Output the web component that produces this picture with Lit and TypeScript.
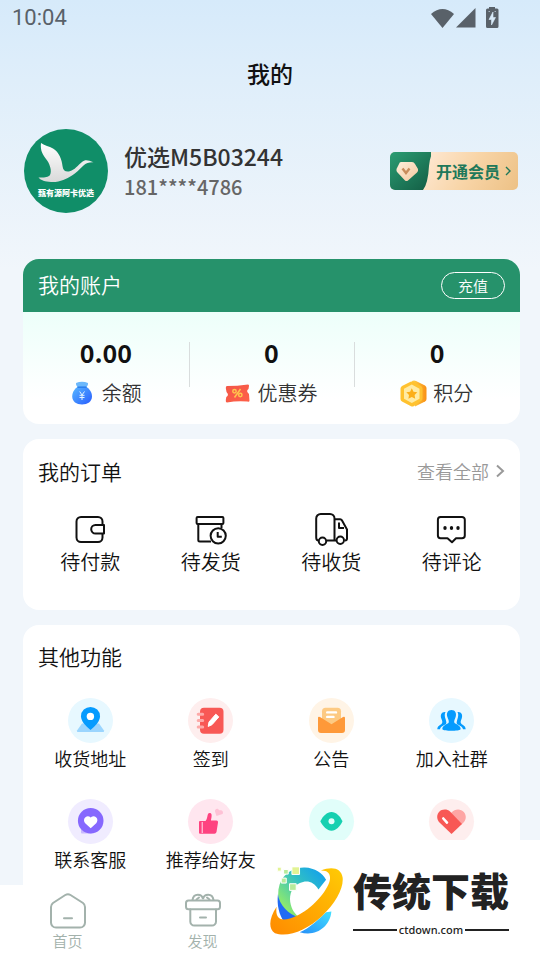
import { LitElement, html, css, svg, TemplateResult } from "lit";
import { customElement } from "lit/decorators.js";

type Entry = { label: string; icon: TemplateResult; tone?: string; hidden?: boolean };

const orders: Entry[] = [
  {
    label: "待付款",
    icon: svg`<rect x="4.500" y="6" width="26" height="25" rx="4.500"/><path d="M32 14H23.500a4.300 4.300 0 0 0 0 8.600H32Z" fill="#fff"/>`,
  },
  {
    label: "待发货",
    icon: svg`<rect x="3.600" y="6" width="26.800" height="7" rx="1"/><path d="M5.300 13V29a1.500 1.500 0 0 0 1.500 1.500H18M28.500 13V17"/><circle cx="25.200" cy="24.800" r="7.600" fill="#fff"/><path d="M24.700 21V25.700H28.800"/>`,
  },
  {
    label: "待收货",
    icon: svg`<path d="M5.500 29.500C3.600 29.500 3.200 28 3.200 26.500V7.500A4.500 4.500 0 0 1 7.700 3H17a4.500 4.500 0 0 1 4.500 4.500V29.500M14 29.500H23.500M21.500 8.300H27.200a2 2 0 0 1 1.700 1L34 18.500V27.500a2 2 0 0 1-2 2M26 11.500V17H31"/><circle cx="9.500" cy="30.300" r="3.700" fill="#fff"/><circle cx="27.300" cy="29.200" r="3.700" fill="#fff"/>`,
  },
  {
    label: "待评论",
    icon: svg`<path d="M6.500 6H28a2.800 2.800 0 0 1 2.800 2.800V24.500A2.800 2.800 0 0 1 28 27.300H22L18 31.200 13.500 27.300H6.500A2.800 2.800 0 0 1 3.900 24.500V8.800A2.800 2.800 0 0 1 6.500 6Z"/><g fill="#111" stroke="none"><ellipse cx="11" cy="17" rx="1.700" ry="2"/><ellipse cx="17.500" cy="17" rx="1.700" ry="2"/><ellipse cx="24" cy="17" rx="1.700" ry="2"/></g>`,
  },
];

const features: Entry[] = [
  {
    label: "收货地址",
    tone: "sky",
    icon: svg`<path d="M14 25.500H31L36 32.500Q36.500 34 35 34H10Q8.500 34 9 32.500Z" fill="#9bd5fe"/><path d="M22.500 32C18 28 13 23.500 13 18.200a9.500 9.300 0 0 1 19 0C32 23.500 27 28 22.500 32Z" fill="#059bfe"/><circle cx="22.400" cy="18.400" r="3.700" fill="#fff"/>`,
  },
  {
    label: "签到",
    tone: "rose",
    icon: svg`<rect x="12" y="9.700" width="23.500" height="26" rx="4" fill="#f85855"/><path d="M10.200 16.200h4.500M10.200 22.600h4.500M10.200 29.100h4.500" stroke="#fda9a8" stroke-width="3" stroke-linecap="round"/><path d="M20.200 28.400 21 24 27.800 16.200 30.800 18.900 24 26.700Z" fill="#fff" stroke="#fff" stroke-linejoin="round"/>`,
  },
  {
    label: "公告",
    tone: "peach",
    icon: svg`<rect x="13" y="9.700" width="19" height="20" rx="3.500" fill="#fdca83"/><path d="M18.200 14.400H27M18.200 18.900H24.500" stroke="#fff" stroke-width="2.400" stroke-linecap="round"/><path d="M9 20Q9 18.200 11 19L22.500 26.300 34 19Q36 18.200 36 20V32a3 3 0 0 1-3 3H12a3 3 0 0 1-3-3Z" fill="#fe9939"/>`,
  },
  {
    label: "加入社群",
    tone: "sky",
    icon: svg`<g fill="#059bfe"><path d="M16.500 14C12.500 13.500 11 17 12.300 20.500 13.300 23 14 24.500 12.500 26 10.500 27.500 8.500 28 8.300 31.300H11C11.500 28.500 14.500 27.300 16.500 26.500 18 25.500 17.200 23.500 16.700 21.500 15.700 18.500 15.300 16.500 16.500 14ZM28.500 14C32.500 13.500 34 17 32.700 20.500 31.700 23 31 24.500 32.500 26 34.500 27.500 36.500 28 36.700 31.300H34C33.500 28.500 30.500 27.300 28.500 26.500 27 25.500 27.800 23.500 28.300 21.500 29.300 18.500 29.700 16.500 28.500 14Z"/><path d="M22.500 12C18.500 12 17.300 15.500 18.300 18.700 19 21 20.500 23.200 19.500 25 17.500 26.500 13.500 27.200 13.300 31.200 15 33.200 30 33.200 31.700 31.200 31.500 27.200 27.500 26.500 25.500 25 24.500 23.200 26 21 26.700 18.700 27.700 15.500 26.500 12 22.500 12Z"/></g>`,
  },
  {
    label: "联系客服",
    tone: "violet",
    icon: svg`<path d="M13 25V33.500Q13 34.500 14 34.500H24Z" fill="#c8b8ff"/><circle cx="22.700" cy="21.800" r="12.800" fill="#8668fe"/><path d="M22.700 29.300 17.200 24.200C14.500 21 17 17 20 17.200 21.500 17.300 22.300 18 22.700 18.500 23.100 18 24 17.300 25.500 17.200 28.500 17 31 21 28.200 24.200Z" fill="#fff"/>`,
  },
  {
    label: "推荐给好友",
    tone: "pink",
    icon: svg`<path d="M12 22H17.500C19.500 19.500 19.200 17 20 15 20.700 13.700 23.500 13.700 23.600 16 23.700 18.500 23 20 23 21.500H28.500Q30.300 21.700 30 23.500L28.500 33Q28 34.800 26.500 34.800H12Q11 34.800 11 33.800V23Q11 22 12 22Z" fill="#fe4380"/><path d="M14.200 23V34" stroke="#ffe6ef"/><path d="M28.500 17 27 12.500C26.700 9.500 30 8.600 31.300 11.300 34 10.500 36 12.800 34.500 15Z" fill="#fec1d5"/>`,
  },
  {
    label: "浏览记录",
    tone: "mint",
    hidden: true,
    icon: svg`<path d="M11.300 22.300C14 17 18 13 22.500 13S31 17 33.500 22.300C31 27.700 27 31.700 22.500 31.700S14 27.700 11.300 22.300Z" fill="#16d0b0"/><circle cx="22.500" cy="22.300" r="3" fill="#e1fefa"/>`,
  },
  {
    label: "我的收藏",
    tone: "rose",
    hidden: true,
    icon: svg`<path d="M22.500 13.500C26 9.500 32 9.800 34.800 13 37.800 16.500 37.200 20.800 34.500 23.600L32.500 25.500 21 14.800Z" fill="#fea5a4"/><path d="M22.500 35 10.500 23.500C7.500 20.500 7.500 15.800 10 13 12.800 10 18 9.800 21 12.600L33 25 Z" fill="#f85855"/><path d="M14.300 19.500 18 23.600" stroke="#fff" stroke-width="2.600" stroke-linecap="round"/>`,
  },
];

const moneyBag = svg`
  <defs><linearGradient id="bag" x1="0" y1="0" x2="1" y2="1"><stop offset="0" stop-color="#58b9ff"/><stop offset="1" stop-color="#285cff"/></linearGradient></defs>
  <path d="M8 4Q14 1.500 20 4 20.500 6 18.500 8H9.500Q7.500 6 8 4Z" fill="#6bb8fb"/>
  <path d="M10.500 7.500H17.500C21.500 9.500 24 13.500 24 17.500 24 22.500 19.500 25.500 14 25.500S4.200 22.500 4.200 17.500C4.200 13.500 6.500 9.500 10.500 7.500Z" fill="url(#bag)"/>
  <path d="M9.500 8.300H18.500" stroke="#2c80ed" stroke-width="1.500"/>
  <path d="M11.700 12.500 14 16 16.500 12.500M14 16V21M11.500 16.300H16.500M11.500 18.500H16.500" stroke="#e4f3ff" fill="none"/>`;

const coupon = svg`
  <defs><linearGradient id="ticket" x1="0" y1="0" x2="1" y2="1"><stop offset="0" stop-color="#f25848"/><stop offset="1" stop-color="#ff6048"/></linearGradient></defs>
  <path d="M4 7Q14 7 25 5.500 26.300 5.500 26 7L25.500 10Q22.500 12 26 15L26.500 22Q26 23.300 24.500 22.500 14 21.500 4 23.500 2.500 23.500 2.800 21L3.300 18Q6.500 16 3.500 13L2.800 9Q2.800 7.200 4 7Z" fill="url(#ticket)"/>
  <path d="M17.500 10 11.500 18.500" stroke="#ffc64d" stroke-width="1.500"/><g fill="none" stroke="#ffc64d" stroke-width="1.500"><circle cx="11.500" cy="12.300" r="1.700"/><circle cx="17.300" cy="16" r="1.700"/></g>`;

const points = svg`
  <defs><linearGradient id="coin" x1="0" y1="0" x2="1" y2="0"><stop offset="0" stop-color="#ffd24b"/><stop offset="1" stop-color="#f98f13"/></linearGradient></defs>
  <path d="M13 2Q15 1 17 2L26 6.500Q27.500 7.500 27.500 9V20Q27.500 21.500 26 22.500L16 27.500Z" fill="url(#coin)"/>
  <path d="M11.500 2.800Q13 2 14.500 2.800L22 7Q23.500 8 23.500 9.500V19.500Q23.500 21 22 22L15 27Q13.500 28 12 27.200L3 22.500Q1.500 21.500 1.500 20V9.500Q1.500 8 3 7Z" fill="#ffc22f"/>
  <path d="M12.800 5.500 20.500 9.800V19.700L12.800 24 5 19.700V9.800Z" fill="#ffeba4"/>
  <path d="M12.800 9.300 14.500 12.700 18.300 13.200 15.600 16 16.200 19.800 12.800 18.100 9.400 19.800 10 16 7.300 13.200 11.100 12.700Z" fill="#fcae18"/>`;

const accounts = [
  { value: "0.00", label: "余额", icon: moneyBag },
  { value: "0", label: "优惠券", icon: coupon },
  { value: "0", label: "积分", icon: points },
];

const tabs: Entry[] = [
  {
    label: "首页",
    icon: svg`<path d="M15.300 2 3 10Q1 11.500 1 14V29.500A5 5 0 0 0 6 34.600H30A5 5 0 0 0 35 29.500V14Q35 11.500 33 10L20.500 2Q18 .400 15.300 2Z"/><path d="M14 25.300H22"/>`,
  },
  {
    label: "发现",
    icon: svg`<rect x="1" y="7.500" width="34" height="8.800" rx="2.500"/><path d="M5.300 16.500V28.500A4 4 0 0 0 9.300 32.600H27A4 4 0 0 0 31 28.500V16.500M15 24.500H21M7.500 7C8 3.500 10 1.800 12.800 1.800S17.500 3.500 18 6C18.500 3.500 20.500 1.800 23.200 1.800S28 3.500 28.500 7M11.500 6.500 14 4.500M24.500 6.500 22 4.500"/>`,
  },
];

@customElement("app-root")
export class AppRoot extends LitElement {
  static styles = css`
    :host {
      --strong: "Noto Sans CJK SC", sans-serif;
      position: relative;
      display: flex;
      flex-direction: column;
      height: 100vh;
      overflow: hidden;
      color: #111;
      font-family: "Noto Sans CJK SC DemiLight", "Noto Sans CJK SC", sans-serif;
      font-weight: 350;
      background: linear-gradient(#d6eafa 0, #dfeefa 80px, #f1f6fb 270px);
    }
    * { box-sizing: border-box; }
    h1, h2, p { margin: 0; }
    button { margin: 0; padding: 0; border: 0; background: none; font: inherit; color: inherit; cursor: pointer; }
    a { color: inherit; text-decoration: none; }
    svg { display: block; flex: none; }
    .scroll { flex: 1; min-height: 0; overflow-y: auto; scrollbar-width: none; }
    .status {
      display: flex; align-items: center; justify-content: space-between;
      height: 36px; padding: 0 40px 0 12px;
      color: #596169; font: 400 22px/36px Roboto, sans-serif;
    }
    .title { font: 500 23px/32px var(--strong); text-align: center; padding: 21px 0; }
    .profile { display: flex; align-items: center; padding: 19px 22px 46px 24px; }
    .who { flex: 1; padding: 0 0 0 16px; }
    .avatar {
      position: relative; width: 84px; height: 84px; border-radius: 50%;
      background: #108e68; overflow: hidden;
    }
    .motto {
      position: absolute; left: 0; right: 0; top: 57px; text-align: center;
      color: #fff; font: 900 8px/14px var(--strong);
    }
    .name { font: 500 23px/32px var(--strong); color: #333; }
    .phone { font: 500 20px/30px var(--strong); color: #666; }
    .vip {
      position: relative; display: flex; align-items: center; gap: 5px;
      height: 38px; padding-right: 7px; border-radius: 5px; overflow: hidden;
      background: linear-gradient(120deg, #fde5cc 30%, #f8d5a8 60%, #edc185);
      color: #20785a; font: 700 16px/24px var(--strong);
    }
    .cards { display: grid; gap: 15px; padding: 0 20px 15px 23px; }
    .card { background: #fff; border-radius: 16px; overflow: hidden; }
    .head { display: flex; align-items: center; justify-content: space-between; padding: 0 15px; }
    .head h2 { font-size: 21px; line-height: 30px; font-weight: 350; }
    .green { background: #26926b; color: #fff; height: 53px; padding-bottom: 3px; }
    .recharge {
      width: 64px; height: 27px; margin-top: 3px; border: 1px solid #fff; border-radius: 14px;
      font-size: 15px; line-height: 24px;
    }
    .account { background: linear-gradient(#edfffa 53px, #fff 85%); }
    .sums { display: grid; grid-template-columns: repeat(3, 1fr); padding: 22px 0 16px; }
    .sum { position: relative; text-align: center; }
    .sum + .sum::before {
      content: ""; position: absolute; left: 0; top: 8px; width: 1px; height: 45px; background: #d9dddd;
    }
    .value { font: 700 25px/36px var(--strong); }
    .kind {
      display: flex; align-items: center; justify-content: center; gap: 5px;
      padding: 8px 2px 0 0; font-size: 20px; line-height: 30px; color: #333;
    }
    .orders { padding: 17px 0 33px; }
    .more { display: flex; align-items: center; gap: 6px; color: #999; font-size: 18px; line-height: 30px; }
    .grid { display: grid; grid-template-columns: repeat(4, 1fr); padding: 0 8px 0 7px; }
    .item { display: flex; flex-direction: column; align-items: center; }
    .orders .grid { padding-top: 25px; }
    .orders .item { font-size: 20px; line-height: 30px; }
    .others { padding: 16px 0 24px; }
    .others .grid { row-gap: 14px; padding-top: 27px; }
    .others .item { font-size: 18px; line-height: 30px; height: 87px; }
    .others .item span { white-space: nowrap; }
    .disc { width: 45px; height: 45px; border-radius: 50%; }
    .sky { background: #e7f8ff; }
    .rose { background: #feeeee; }
    .peach { background: #fff4e6; }
    .violet { background: #f0ecff; }
    .pink { background: #ffe6ef; }
    .mint { background: #e1fefa; }
    .tabs { display: grid; grid-template-columns: repeat(4, 1fr); height: 75px; padding-top: 8px; background: #fff; }
    .tab { display: flex; flex-direction: column; align-items: center; color: #a3b2ac; font-size: 15px; line-height: 24px; }
    .badge {
      position: absolute; right: 0; bottom: 0; display: flex; align-items: center;
      gap: 10px; height: 120px; padding: 2px 31px 0 10px; background: #fff; color: #222;
    }
    .brand { display: grid; row-gap: 9px; }
    .mark { font: 900 39px/48px var(--strong); }
    .site {
      display: grid; grid-template-columns: 1fr auto 1fr; align-items: center; gap: 2px;
      font: 500 11px/16px "Noto Sans", sans-serif;
    }
    .site::before, .site::after { content: ""; height: 2px; background: #222; }
  `;

  render() {
    return html`
      <main class="scroll">
        <div class="status">
          <span>10:04</span>
          <svg width="70" height="24" fill="currentColor" aria-hidden="true">
            <path d="M1 8Q12.500-2 24 8L12.500 22Z"/>
            <path d="M45.500 2V21.500H26Z"/>
            <path d="M59 2.500V1H65V2.500H67Q68.500 2.500 68.500 4V20.500Q68.500 22 67 22H57.500Q56 22 56 20.500V4Q56 2.500 57.500 2.500Z"/>
            <path d="M63 6 59 13.500H61.500V19L65.500 11.500H63ZM58.500 5.500H60M64.500 5.500H66" fill="#d8ebfa" stroke="#d8ebfa" stroke-width=".6"/>
          </svg>
        </div>
        <h1 class="title">我的</h1>
        <section class="profile">
          <div class="avatar">
            <svg width="84" height="84" aria-hidden="true">
              <defs><linearGradient id="swan" x1="0" y1="0" x2="0" y2="1"><stop offset="0" stop-color="#fff"/><stop offset="1" stop-color="#d9d9d9"/></linearGradient></defs>
              <path d="M17 14C21 17 25 17 29 19.500C35 23 38 31 38.500 37C39 41 41 43 45 42.500C51 41 54 36 58 33C61 30.500 64 31 69.500 33.300C66 33 62 34 59.500 36.500C55 41 52 44 48 46.500C42 50 36 53.500 27 53C21 52.500 17 51.500 14.500 48.500C18 48.500 24 49 26 46C28 42 26 36 23.500 32C19 26 16 22 17 14Z" fill="url(#swan)"/>
            </svg>
            <span class="motto">甄有源阿卡优选</span>
          </div>
          <div class="who">
            <p class="name">优选M5B03244</p>
            <p class="phone">181****4786</p>
          </div>
          <button class="vip">
            <svg width="41" height="38" aria-hidden="true">
              <defs><linearGradient id="vip" x1="0" y1="0" x2="1" y2="1"><stop offset="0" stop-color="#2b9d73"/><stop offset="1" stop-color="#125a42"/></linearGradient>
              <linearGradient id="gem" x1="0" y1="0" x2="1" y2="1"><stop offset="0" stop-color="#fff0dc"/><stop offset="1" stop-color="#f4c79e"/></linearGradient></defs>
              <path d="M0 0H44Q40 3 39 14 38 32 33 38H0Z" fill="url(#vip)"/>
              <path d="M11 10H22Q24 10 25 12L28 17Q28.500 19 27 20.500L18 28.500Q16.500 29.500 15 28.500L7.500 20.500Q6 19 6.500 17L9 12Q9.500 10 11 10Z" fill="url(#gem)"/>
              <path d="M12.500 16.500 16 21 19.500 16.500" fill="none" stroke="#c98d5d" stroke-width="2.400"/>
            </svg>
            <span>开通会员</span>
            <svg width="6" height="10" fill="none" stroke="currentColor" stroke-width="1.400" aria-hidden="true"><path d="M1 1 5 5 1 9"/></svg>
          </button>
        </section>
        <div class="cards">
          <section class="card account">
            <header class="head green"><h2>我的账户</h2><button class="recharge">充值</button></header>
            <div class="sums">
              ${accounts.map(a => html`<div class="sum">
                <p class="value">${a.value}</p>
                <p class="kind"><svg width="29" height="29" aria-hidden="true">${a.icon}</svg>${a.label}</p>
              </div>`)}
            </div>
          </section>
          <section class="card orders">
            <header class="head"><h2>我的订单</h2>
              <a class="more" href="#orders">查看全部
                <svg width="10" height="14" fill="none" stroke="currentColor" stroke-width="2" aria-hidden="true"><path d="M2 1.500 8 7 2 12.500"/></svg>
              </a>
            </header>
            <div class="grid">
              ${orders.map(o => html`<button class="item">
                <svg width="36" height="36" fill="none" stroke="#111" stroke-width="2" stroke-linejoin="round" aria-hidden="true">${o.icon}</svg>
                <span>${o.label}</span>
              </button>`)}
            </div>
          </section>
          <section class="card others">
            <header class="head"><h2>其他功能</h2></header>
            <div class="grid">
              ${features.map(f => html`<button class="item" aria-label=${f.label}>
                <svg class="disc ${f.tone}" viewBox="0 0 45 45" fill="none" aria-hidden="true">${f.icon}</svg>
                ${f.hidden ? "" : html`<span>${f.label}</span>`}
              </button>`)}
            </div>
          </section>
        </div>
      </main>
      <nav class="tabs">
        ${tabs.map(t => html`<a class="tab" href="#">
          <svg width="36" height="36" fill="none" stroke="currentColor" stroke-width="2" stroke-linecap="round" aria-hidden="true">${t.icon}</svg>
          <span>${t.label}</span>
        </a>`)}
      </nav>
      <aside class="badge">
        <svg width="73" height="68" viewBox="0 0 220 204" aria-hidden="true">
          <defs>
            <linearGradient id="leaf" x1="0" y1="1" x2="1" y2="0"><stop offset=".2" stop-color="#8ce96f"/><stop offset=".6" stop-color="#30bfc5"/><stop offset="1" stop-color="#0d9af4"/></linearGradient>
            <linearGradient id="ring" x1="0" y1="1" x2="1" y2="0"><stop offset="0" stop-color="#ff8a00"/><stop offset="1" stop-color="#ffcb05"/></linearGradient>
            <linearGradient id="sea" x1="0" y1="1" x2="1" y2="0"><stop offset="0" stop-color="#278ff8"/><stop offset="1" stop-color="#42e0ff"/></linearGradient>
          </defs>
          <path d="M169 38 146 67C132 43 110 38 90 48 66 58 58 82 61 105 65 128 75 143 91 152L55 160C25 125 15 75 35 38 50 12 80 0 105 1 135 2 158 18 169 38Z" fill="url(#leaf)"/>
          <path d="M24 82C28 115 55 142 90 153L42 164C28 145 20 115 24 82Z" fill="#216bf4"/>
          <path d="M185 134C181 181 137 211 90 196 120 184 145 158 169 136Z" fill="url(#sea)"/>
          <path d="M20 119C-3 152-6 187 15 199 55 213 112 189 157 147 197 109 222 65 219 32 215 3 188-3 153 10 180 9 187 27 176 52 158 92 108 140 60 155 30 164 15 153 20 119Z" fill="url(#ring)"/>
          <g fill="#b7eb9b" stroke="#fff" stroke-width="3"><path d="M22 0H34V12H22ZM66-1H89V22H66Z" fill="#e2f394"/><path d="M41 7H55V21H41ZM34 33H49V48H34ZM59 50H79V70H59Z"/></g>
        </svg>
        <div class="brand"><span class="mark">传统下载</span><span class="site">ctdown.com</span></div>
      </aside>
    `;
  }
}
